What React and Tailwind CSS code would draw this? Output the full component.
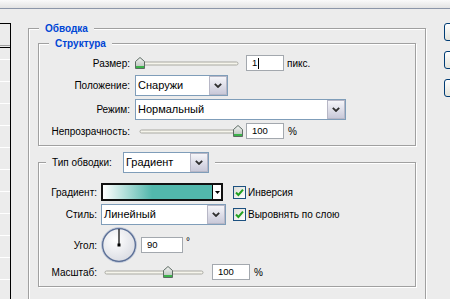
import React from "react";

// Photoshop "Обводка" layer style panel (XP look)

function Chevron() {
  return (
    <svg width="8" height="5" viewBox="0 0 8 5" className="block">
      <path d="M0.8 0.8 L4 4 L7.2 0.8" fill="none" stroke="#2f2f2f" strokeWidth="1.8" />
    </svg>
  );
}

function Select({ w, value }) {
  return (
    <div className={`flex h-[21px] shrink-0 border border-[#7f9db9] bg-white ${w}`}>
      <div className="flex-1 pl-[2px] flex items-center text-[11px] leading-none whitespace-nowrap overflow-hidden">
        {value}
      </div>
      <div className="w-[18px] h-full border border-[#b7b7c6] bg-linear-to-b from-[#f5f5f9] to-[#c9c9d9] flex items-center justify-center">
        <Chevron />
      </div>
    </div>
  );
}

function Field({ w = "w-[38px]", value, caret }) {
  return (
    <div className={`${w} h-[16px] shrink-0 border border-[#a3a8ae] bg-white flex items-center pl-[5px] text-[9.5px] leading-none`}>
      {value}
      {caret && <span className="ml-[1px] w-[1px] h-[11px] bg-black" />}
    </div>
  );
}

function Slider({ v }) {
  const x = v * 98;
  return (
    <svg width="108" height="12" viewBox="0 0 108 12" className="block shrink-0">
      <defs>
        <linearGradient id="thumbg" x1="0" y1="0" x2="0" y2="1">
          <stop offset="0" stopColor="#f4f6f4" />
          <stop offset="1" stopColor="#b4bcb6" />
        </linearGradient>
      </defs>
      <rect x="5" y="5" width="98" height="3" rx="1.5" fill="#f6f5ec" stroke="#a9a9a2" strokeWidth="1" />
      <g transform={`translate(${x},0)`}>
        <path d="M0.5 4.5 L5 0.5 L9.5 4.5 L9.5 11.5 L0.5 11.5 Z" fill="url(#thumbg)" stroke="#5d6b63" strokeWidth="1" />
        <rect x="1" y="9" width="8" height="2" fill="#3bb34a" />
      </g>
    </svg>
  );
}

function Check({ label }) {
  return (
    <div className="flex items-center">
      <span className="w-[13px] h-[13px] border border-[#1c5180] bg-linear-to-br from-[#dcdcd7] to-white flex items-center justify-center">
        <svg width="9" height="9" viewBox="0 0 9 9" className="block">
          <path d="M1 4.5 L3.4 7 L8 1.6" fill="none" stroke="#21a121" strokeWidth="2" />
        </svg>
      </span>
      <span className="ml-[2px] whitespace-nowrap">{label}</span>
    </div>
  );
}

function Dial() {
  return (
    <svg width="36" height="36" viewBox="0 0 36 36" className="block shrink-0">
      <defs>
        <radialGradient id="dialg" cx="40%" cy="35%" r="70%">
          <stop offset="0" stopColor="#ffffff" />
          <stop offset="1" stopColor="#d9dbe2" />
        </radialGradient>
      </defs>
      <circle cx="18" cy="18" r="16.5" fill="url(#dialg)" stroke="#5b6f96" strokeWidth="1.6" />
      <circle cx="18" cy="18" r="17.5" fill="none" stroke="#b9c3d6" strokeWidth="0.8" />
      <line x1="18" y1="18" x2="18" y2="2" stroke="#000" strokeWidth="1.2" />
      <rect x="16.5" y="16.5" width="3" height="3" fill="#000" />
    </svg>
  );
}

export default function App() {
  const rows = [0, 1, 2, 3, 4, 5, 6, 7, 8, 9, 10];

  return (
    <div className="w-[450px] h-[299px] overflow-hidden bg-[#ececec] text-black text-[10px] font-['Liberation_Sans',Arial,sans-serif] flex flex-col">
      {/* top strip */}
      <div className="h-[9px] shrink-0 border-b border-[#8c96a8] bg-linear-to-b from-[#fafafa] to-[#e3e3e3]" />

      <div className="flex flex-1">
        {/* left styles list */}
        <div className="w-[11px] shrink-0 flex flex-col">
          <div className="h-[14px] shrink-0" />
          <div className="flex-1 border-t border-r border-black flex flex-col">
            <div className="h-[21px] shrink-0" />
            <div className="h-[1px] shrink-0 bg-[#a0a0a0]" />
            <div className="h-[1px] shrink-0" />
            <div className="h-[1px] shrink-0 bg-black" />
            <div className="h-[12px] shrink-0 border-b border-white" />
            {rows.map((r) => (
              <div key={r} className="h-[22px] shrink-0 border-b border-white" />
            ))}
          </div>
        </div>

        {/* outer group: Обводка */}
        <div className="ml-[17px] mt-[19px] w-[398px] h-[300px] shrink-0 border border-[#a0a0a0] shadow-[inset_1px_1px_0_#fff,1px_1px_0_#fff]">
          <div className="-mt-[7px] ml-[10px] px-[6px] w-fit h-[13px] leading-[13px] bg-[#ececec] font-bold text-[#0046d5]">
            Обводка
          </div>

          {/* Структура */}
          <div className="ml-[9px] mt-[8px] w-[378px] border border-[#a0a0a0] shadow-[inset_1px_1px_0_#fff,1px_1px_0_#fff] pb-[6px]">
            <div className="-mt-[7px] ml-[10px] px-[6px] w-fit h-[13px] leading-[13px] bg-[#ececec] font-bold text-[#0046d5]">
              Структура
            </div>

            <div className="mt-[5px] h-[16px] flex items-center">
              <div className="w-[91px] text-right">Размер:</div>
              <div className="ml-[5px]">
                <Slider v={0} />
              </div>
              <div className="ml-[3px]">
                <Field value="1" caret />
              </div>
              <div className="ml-[3px]">пикс.</div>
            </div>

            <div className="mt-[4px] h-[21px] flex items-center">
              <div className="w-[91px] text-right">Положение:</div>
              <div className="ml-[5px]">
                <Select w="w-[93px]" value="Снаружи" />
              </div>
            </div>

            <div className="mt-[3px] h-[21px] flex items-center">
              <div className="w-[91px] text-right">Режим:</div>
              <div className="ml-[5px]">
                <Select w="w-[211px]" value="Нормальный" />
              </div>
            </div>

            <div className="mt-[3px] h-[16px] flex items-center">
              <div className="w-[91px] text-right">Непрозрачность:</div>
              <div className="ml-[5px]">
                <Slider v={1} />
              </div>
              <div className="ml-[3px]">
                <Field value="100" />
              </div>
              <div className="ml-[4px]">%</div>
            </div>
          </div>

          {/* Тип обводки */}
          <div className="ml-[9px] mt-[16px] w-[378px] border border-[#a0a0a0] shadow-[inset_1px_1px_0_#fff,1px_1px_0_#fff] pb-[6px]">
            <div className="-mt-[11px] ml-[7px] px-[6px] w-fit h-[21px] bg-[#ececec] flex items-center">
              <div className="w-[66px] whitespace-nowrap">Тип обводки:</div>
              <div className="ml-[5px]">
                <Select w="w-[86px]" value="Градиент" />
              </div>
            </div>

            <div className="mt-[10px] h-[18px] flex items-center">
              <div className="w-[58px] text-right">Градиент:</div>
              <div className="ml-[4px] w-[132px] flex items-center">
                <div className="w-[122px] h-[18px] border-2 border-[#111] flex">
                  <div className="flex-1 bg-[linear-gradient(to_right,#ffffff,#52b7ac_45%,#52b7ac)]" />
                  <div className="w-[9px] bg-white border-l border-black flex items-center justify-center">
                    <svg width="5" height="3" viewBox="0 0 5 3" className="block">
                      <path d="M0 0 L5 0 L2.5 3 Z" fill="#000" />
                    </svg>
                  </div>
                </div>
              </div>
              <Check label="Инверсия" />
            </div>

            <div className="mt-[3px] h-[21px] flex items-center">
              <div className="w-[58px] text-right">Стиль:</div>
              <div className="ml-[4px] w-[132px] flex items-center">
                <Select w="w-[125px]" value="Линейный" />
              </div>
              <Check label="Выровнять по слою" />
            </div>

            <div className="mt-[2px] h-[36px] flex items-center">
              <div className="w-[58px] text-right">Угол:</div>
              <div className="ml-[4px]">
                <Dial />
              </div>
              <div className="ml-[4px]">
                <Field w="w-[42px]" value="90" />
              </div>
              <div className="ml-[3px] self-start mt-[10px] leading-none">°</div>
            </div>

            <div className="mt-[1px] h-[16px] flex items-center">
              <div className="w-[58px] text-right">Масштаб:</div>
              <div className="ml-[3px]">
                <Slider v={0.643} />
              </div>
              <div className="ml-[4px]">
                <Field value="100" />
              </div>
              <div className="ml-[4px]">%</div>
            </div>
          </div>
        </div>

        {/* right buttons (only their left edges are in view) */}
        <div className="ml-[18px] mt-[14px] flex flex-col gap-[10px] shrink-0">
          <div className="w-[75px] h-[18px] rounded-[3px] border border-[#003c74] bg-linear-to-b from-white to-[#e4e4dc]" />
          <div className="w-[75px] h-[18px] rounded-[3px] border border-[#003c74] bg-linear-to-b from-white to-[#e4e4dc]" />
          <div className="w-[75px] h-[18px] rounded-[3px] border border-[#003c74] bg-linear-to-b from-white to-[#e4e4dc]" />
        </div>
      </div>
    </div>
  );
}
